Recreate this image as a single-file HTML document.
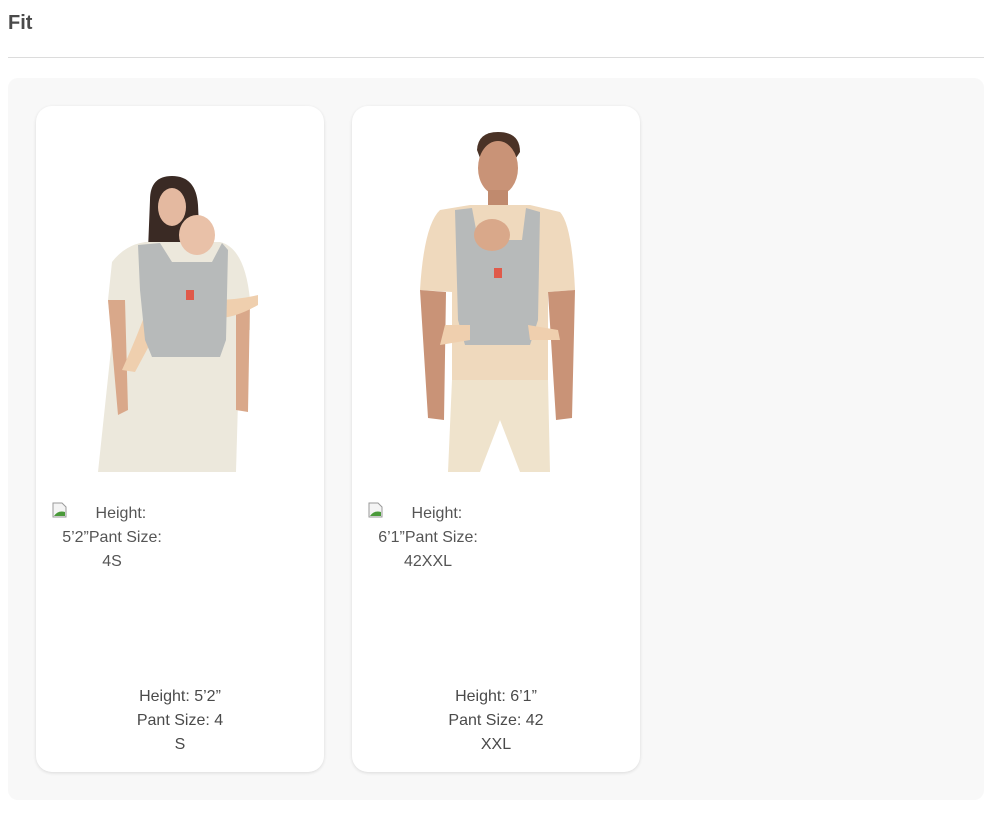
<!DOCTYPE html>
<html><head><style>
*{margin:0;padding:0;box-sizing:border-box}
body{width:1002px;height:824px;background:#fff;font-family:"Liberation Sans",Arial,sans-serif;position:relative;overflow:hidden;color:#4a4a4a}
h2{position:absolute;left:8px;top:12px;font-size:20px;font-weight:bold;color:#4a4a4a}
.hr{position:absolute;left:8px;top:57px;width:976px;height:1px;background:#dcdcdc}
.box{position:absolute;left:8px;top:78px;width:976px;height:722px;background:#f8f8f8;border-radius:10px}
.card{position:absolute;top:106px;width:288px;height:666px;background:#fff;border-radius:16px;box-shadow:0 1px 3px rgba(0,0,0,.12)}
.alt{position:absolute;top:502px;width:120px;text-align:center;font-size:16px;line-height:24px;color:#555}
.cap{position:absolute;top:685px;width:100px;text-align:center;font-size:16px;line-height:24px;color:#4a4a4a}
svg.p{position:absolute;left:0;top:0}
</style></head><body>
<h2>Fit</h2>
<div class="hr"></div>
<div class="box"></div>
<div class="card" style="left:36px"></div>
<div class="card" style="left:352px"></div>
<svg class="p" width="1002" height="824">
<path d="M150 200 Q150 176 172 176 Q196 176 198 205 L200 250 L148 250 Z" fill="#3a2a24"/>
<ellipse cx="172" cy="207" rx="14" ry="19" fill="#e4b9a0"/>
<path d="M112 262 Q125 245 145 242 L220 242 Q245 248 250 300 L250 330 L240 332 L236 472 L98 472 L112 340 L108 300 Z" fill="#ece8dc"/>
<path d="M108 300 L125 300 L128 410 L118 415 Z M236 300 L250 300 L248 412 L236 410 Z" fill="#d9a88a"/>
<path d="M150 300 Q140 330 122 370 L135 372 Q155 335 165 315 Z M212 300 Q238 300 258 295 L258 305 Q232 320 212 318 Z" fill="#efcfae"/>
<path d="M138 245 L160 243 L172 262 L212 262 L222 243 L228 250 L226 340 L220 357 L152 357 L145 340 L140 290 Z" fill="#b7baba"/>
<ellipse cx="197" cy="235" rx="18" ry="20" fill="#e9c1a8"/>
<rect x="186" y="290" width="8" height="10" fill="#e05a4a"/>
<path d="M477 150 Q478 132 498 132 Q520 132 520 152 L516 158 L480 158 Z" fill="#4a3226"/>
<ellipse cx="498" cy="168" rx="20" ry="27" fill="#c99377"/>
<rect x="488" y="190" width="20" height="20" fill="#c08a6e"/>
<path d="M440 210 L470 205 L530 205 L560 212 Q572 225 575 290 L548 292 L548 385 L452 385 L452 292 L420 290 Q424 225 440 210 Z" fill="#efd9bd"/>
<path d="M420 290 L446 292 L444 420 L428 418 Z M548 292 L575 290 L572 418 L556 420 Z" fill="#c99377"/>
<path d="M452 380 L548 380 L550 472 L520 472 L500 420 L480 472 L448 472 Z" fill="#efe3cc"/>
<path d="M455 210 L472 208 L478 240 L522 240 L526 208 L540 212 L538 320 L530 345 L465 345 L458 320 Z" fill="#b7baba"/>
<ellipse cx="492" cy="235" rx="18" ry="16" fill="#d9a88a"/>
<rect x="494" y="268" width="8" height="10" fill="#e05a4a"/>
<path d="M445 325 L470 325 L470 340 L440 345 Z M528 325 L558 330 L560 340 L530 340 Z" fill="#efcfae"/>
<g transform="translate(52,502)"><path d="M1 1 H10 L14 5 V15 H1 Z" fill="#f4f4f4" stroke="#9a9a9a"/><path d="M2 14 Q6 8 13 10 V14 Z" fill="#4a9a3a"/></g>
<g transform="translate(368,502)"><path d="M1 1 H10 L14 5 V15 H1 Z" fill="#f4f4f4" stroke="#9a9a9a"/><path d="M2 14 Q6 8 13 10 V14 Z" fill="#4a9a3a"/></g>
</svg>
<div class="alt" style="left:52px">&nbsp;&nbsp;&nbsp;&nbsp;Height:<br>5’2”Pant Size:<br>4S</div>
<div class="alt" style="left:368px">&nbsp;&nbsp;&nbsp;&nbsp;Height:<br>6’1”Pant Size:<br>42XXL</div>
<div class="cap" style="left:130px">Height: 5’2”<br>Pant Size: 4<br>S</div>
<div class="cap" style="left:446px">Height: 6’1”<br>Pant Size: 42<br>XXL</div>
</body></html>
